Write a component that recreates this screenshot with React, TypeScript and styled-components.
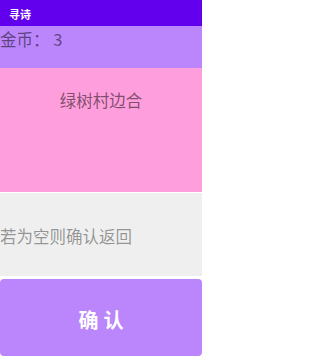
import styled, { createGlobalStyle } from "styled-components";

const GlobalStyle = createGlobalStyle`
  html, body {
    margin: 0;
    padding: 0;
    background: #ffffff;
  }
  body {
    font-family: "Noto Sans CJK SC", "Noto Sans", sans-serif;
  }
  * {
    box-sizing: border-box;
  }
`;

export default function App() {
  return (
    <>
      <GlobalStyle />
      <Screen>
        <TitleBar>寻诗</TitleBar>
        <CoinBar>金币： 3</CoinBar>
        <PoemPanel>绿树村边合</PoemPanel>
        <AnswerField>
          <Hint>若为空则确认返回</Hint>
        </AnswerField>
        <ConfirmButton type="button">确认</ConfirmButton>
      </Screen>
    </>
  );
}

// =================== Styled Components ===================

const Screen = styled.div`
  width: 202px;
  height: 359px;
  display: flex;
  flex-direction: column;
  background: #ffffff;
  overflow: hidden;
`;

const TitleBar = styled.div`
  height: 26px;
  flex-shrink: 0;
  display: flex;
  align-items: center;
  padding-left: 9px;
  padding-top: 1px;
  background: #6200ee;
  color: #ffffff;
  font-size: 11px;
  font-weight: 700;
`;

const CoinBar = styled.div`
  height: 42px;
  flex-shrink: 0;
  padding-top: 3px;
  background: #bb86fc;
  color: rgba(0, 0, 0, 0.5);
  font-size: 16.5px;
  line-height: 20px;
`;

const PoemPanel = styled.div`
  height: 124px;
  flex-shrink: 0;
  padding-top: 22px;
  background: #ff9edc;
  color: rgba(0, 0, 0, 0.52);
  font-size: 16.5px;
  line-height: 20px;
  text-align: center;
`;

const AnswerField = styled.div`
  height: 83px;
  flex-shrink: 0;
  margin-top: 1px;
  display: flex;
  align-items: center;
  padding-top: 3px;
  background: #efefef;
`;

const Hint = styled.span`
  color: rgba(0, 0, 0, 0.4);
  font-size: 16.5px;
  line-height: 20px;
`;

const ConfirmButton = styled.button`
  height: 77px;
  flex-shrink: 0;
  margin: 3px 0 0;
  padding: 4px 0 0 5px;
  border: none;
  border-radius: 4px;
  background: #bb86fc;
  color: #ffffff;
  font-family: "Noto Sans CJK SC", "Noto Sans", sans-serif;
  font-size: 20px;
  font-weight: 700;
  letter-spacing: 5px;
  cursor: pointer;
`;
